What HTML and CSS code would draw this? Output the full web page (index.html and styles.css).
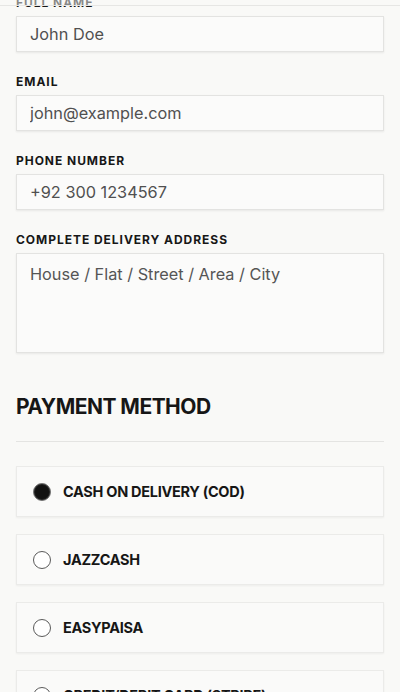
FILE: index.html
```html
<!DOCTYPE html>
<html lang="en">
<head>
<meta charset="utf-8">
<meta name="viewport" content="width=device-width, initial-scale=1">
<title>Checkout</title>
<link rel="stylesheet" href="styles.css">
</head>
<body>
<div class="topbar"></div>
<main class="page">
  <form class="form">
    <div class="field">
      <label class="label" for="name">FULL NAME</label>
      <input class="input" id="name" type="text" value="John Doe">
    </div>
    <div class="field">
      <label class="label" for="email">EMAIL</label>
      <input class="input" id="email" type="email" value="john@example.com">
    </div>
    <div class="field">
      <label class="label" for="phone">PHONE NUMBER</label>
      <input class="input" id="phone" type="tel" value="+92 300 1234567">
    </div>
    <div class="field">
      <label class="label" for="addr">COMPLETE DELIVERY ADDRESS</label>
      <textarea class="input textarea" id="addr" placeholder="House / Flat / Street / Area / City"></textarea>
    </div>

    <section class="payment">
      <h2 class="heading">PAYMENT METHOD</h2>
      <div class="options">
        <label class="option"><span class="radio checked"></span><span class="opt-text">CASH ON DELIVERY (COD)</span></label>
        <label class="option"><span class="radio"></span><span class="opt-text">JAZZCASH</span></label>
        <label class="option"><span class="radio"></span><span class="opt-text">EASYPAISA</span></label>
        <label class="option"><span class="radio"></span><span class="opt-text">CREDIT/DEBIT CARD (STRIPE)</span></label>
      </div>
    </section>
  </form>
</main>
</body>
</html>
```
FILE: styles.css
```css
* { box-sizing: border-box; }
html, body { margin: 0; padding: 0; }
body {
  background: #f9f9f7;
  font-family: Inter, "Noto Sans", sans-serif;
  color: #161616;
  overflow: hidden;
  height: 692px;
}
.topbar {
  position: fixed;
  top: 0; left: 0; right: 0;
  height: 6px;
  background: rgba(249, 249, 247, 0.5);
  border-bottom: 1px solid #e6e6e4;
  z-index: 5;
}
.page {
  padding: 0 16px;
  margin-top: -6px;
}
.form { display: flex; flex-direction: column; }
.field { display: flex; flex-direction: column; margin-bottom: 21px; }
.label {
  font-size: 12px;
  line-height: 18px;
  font-weight: 700;
  letter-spacing: 0.08em;
  margin-bottom: 4px;
  color: #171717;
}
.input {
  height: 36px;
  border: 1px solid #e3e3e1;
  background: #fbfbfa;
  box-shadow: 0 1px 2px rgba(0,0,0,0.07);
  padding: 0 13px;
  font-family: Inter, "Noto Sans", sans-serif;
  font-size: 16.3px;
  color: #505050;
  border-radius: 0;
  outline: none;
  width: 100%;
}
.textarea {
  height: 100px;
  padding: 9px 13px;
  resize: none;
  line-height: 22px;
}
.textarea::placeholder { color: #555; opacity: 1; }
.payment { margin-top: 19px; }
.heading {
  margin: 0;
  font-size: 21px;
  line-height: 28px;
  font-weight: 700;
  letter-spacing: -0.025em;
  padding-bottom: 20px;
  border-bottom: 1px solid #e4e4e2;
}
.options {
  margin-top: 24px;
  display: flex;
  flex-direction: column;
  gap: 17px;
}
.option {
  height: 51px;
  display: flex;
  align-items: center;
  gap: 12px;
  padding: 0 16px;
  border: 1px solid #ebebe9;
  background: #fafaf9;
  box-shadow: 0 1px 2px rgba(0,0,0,0.05);
}
.radio {
  width: 18px; height: 18px;
  border-radius: 50%;
  border: 1px solid #5a5a5a;
  background: #fff;
  flex: none;
}
.radio.checked {
  background: #111;
  border: 1px solid #777;
  box-shadow: inset 0 0 0 1px #222;
}
.opt-text {
  font-size: 14.5px;
  font-weight: 700;
  letter-spacing: -0.02em;
  color: #161616;
}
```
